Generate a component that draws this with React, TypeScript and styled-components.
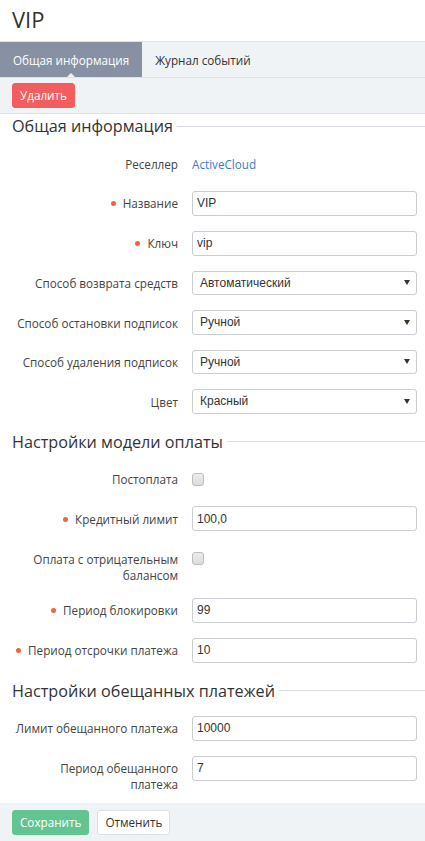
import React from "react";
import styled, { createGlobalStyle } from "styled-components";

const GlobalStyle = createGlobalStyle`
  html, body { margin: 0; padding: 0; background: #fff; }
  body { font-family: "Open Sans", "Liberation Sans", sans-serif; color: #333; }
  * { box-sizing: border-box; }
`;

const Page = styled.div`
  width: 425px;
  min-height: 841px;
  display: flex;
  flex-direction: column;
  background: #fff;
`;

const Title = styled.h1`
  margin: 0;
  height: 41px;
  padding: 7px 12px 0;
  font-size: 22px;
  line-height: 24px;
  font-weight: 400;
  color: #333;
`;

const TabBar = styled.div`
  display: flex;
  height: 37px;
  background: #f0f3f6;
  border-top: 1px solid #dfe2e7;
  border-bottom: 1px solid #dfe2e7;
`;

const Tab = styled.div<{ $active?: boolean }>`
  position: relative;
  display: flex;
  align-items: center;
  padding: 0 13px;
  font-size: 11.7px;
  color: ${(p) => (p.$active ? "#fff" : "#333")};
  background: ${(p) => (p.$active ? "#8891a3" : "transparent")};
  ${(p) =>
    p.$active
      ? `&::after {
    content: "";
    position: absolute;
    left: 50%;
    bottom: 0;
    margin-left: -4px;
    border-left: 4px solid transparent;
    border-right: 4px solid transparent;
    border-bottom: 4px solid #f0f3f6;
  }`
      : ""}
`;

const Toolbar = styled.div`
  display: flex;
  align-items: center;
  gap: 8px;
  height: 36px;
  padding: 0 12px;
  background: #f0f3f6;
  border-bottom: 1px solid #dfe2e7;
`;

const Button = styled.button<{ $variant: "danger" | "primary" | "default" }>`
  height: 25px;
  padding: 0 7px;
  border-radius: 3px;
  font-family: inherit;
  font-size: 11.7px;
  line-height: 23px;
  cursor: pointer;
  border: 1px solid
    ${(p) =>
      p.$variant === "danger" ? "#f25e5e" : p.$variant === "primary" ? "#62c492" : "#dcdfe4"};
  background: ${(p) =>
    p.$variant === "danger" ? "#f25e5e" : p.$variant === "primary" ? "#62c492" : "#fff"};
  color: ${(p) => (p.$variant === "default" ? "#333" : "#fff")};
`;

const Form = styled.div`
  display: flex;
  flex-direction: column;
  padding-bottom: 11px;
`;

const Section = styled.section`
  display: flex;
  flex-direction: column;
  & + & {
    margin-top: 16px;
  }
`;

const SectionHeading = styled.h2`
  margin: 0 0 13px;
  height: 24px;
  display: flex;
  align-items: center;
  gap: 4px;
  padding-left: 12px;
  font-size: 16.2px;
  font-weight: 400;
  color: #333;
  &::after {
    content: "";
    flex: 1;
    height: 1px;
    background: #dcdee3;
  }
`;

const Rows = styled.div`
  display: flex;
  flex-direction: column;
  gap: 15px;
`;

const Row = styled.div`
  display: grid;
  grid-template-columns: 166px 1fr;
  column-gap: 14px;
  padding: 0 8px 0 12px;
`;

const Label = styled.div<{ $required?: boolean }>`
  text-align: right;
  font-size: 11.7px;
  line-height: 16px;
  padding-top: 4.5px;
  color: #444;
  ${(p) =>
    p.$required
      ? `&::before {
    content: "";
    display: inline-block;
    width: 5px;
    height: 5px;
    border-radius: 50%;
    background: #f0643a;
    margin-right: 7px;
    vertical-align: 2px;
  }`
      : ""}
`;

const Control = styled.div`
  display: flex;
  align-items: flex-start;
  min-height: 24.5px;
`;

const StaticLink = styled.a`
  font-size: 11.7px;
  line-height: 16px;
  padding-top: 4.5px;
  color: #3b7dc8;
  text-decoration: none;
`;

const TextInput = styled.input`
  width: 100%;
  height: 25px;
  padding: 0 4px;
  border: 1px solid #c9ccd1;
  border-radius: 3px;
  font-family: "Liberation Sans", Arial, sans-serif;
  font-size: 12px;
  color: #333;
  outline: none;
`;

const SelectBox = styled.div`
  width: 100%;
  height: 24.5px;
  display: flex;
  align-items: center;
  justify-content: space-between;
  padding: 0 6px 0 7px;
  border: 1px solid #c9ccd1;
  border-radius: 3px;
  font-family: "Liberation Sans", Arial, sans-serif;
  font-size: 12px;
  color: #333;
  background: #fff;
`;

const Checkbox = styled.span`
  display: inline-block;
  margin-top: 6px;
  width: 12px;
  height: 13px;
  border: 1px solid #bdbdbd;
  border-radius: 3px;
  background: linear-gradient(#ececec, #dcdcdc);
`;

const Footer = styled.div`
  display: flex;
  align-items: center;
  gap: 8px;
  height: 38px;
  padding: 0 12px;
  background: #f0f3f6;
`;

const Arrow = () => (
  <svg width="6" height="5" viewBox="0 0 6 5">
    <path d="M0 0h6L3 5z" fill="#333" />
  </svg>
);

type Field =
  | { kind: "link"; label: string; value: string; required?: boolean }
  | { kind: "input"; label: string; value: string; required?: boolean }
  | { kind: "select"; label: string; value: string; required?: boolean }
  | { kind: "check"; label: string; required?: boolean };

const renderControl = (f: Field) => {
  switch (f.kind) {
    case "link":
      return <StaticLink href="#">{f.value}</StaticLink>;
    case "input":
      return <TextInput defaultValue={f.value} />;
    case "select":
      return (
        <SelectBox>
          <span>{f.value}</span>
          <Arrow />
        </SelectBox>
      );
    case "check":
      return <Checkbox />;
  }
};

const sections: { title: string; fields: Field[] }[] = [
  {
    title: "Общая информация",
    fields: [
      { kind: "link", label: "Реселлер", value: "ActiveCloud" },
      { kind: "input", label: "Название", value: "VIP", required: true },
      { kind: "input", label: "Ключ", value: "vip", required: true },
      { kind: "select", label: "Способ возврата средств", value: "Автоматический" },
      { kind: "select", label: "Способ остановки подписок", value: "Ручной" },
      { kind: "select", label: "Способ удаления подписок", value: "Ручной" },
      { kind: "select", label: "Цвет", value: "Красный" },
    ],
  },
  {
    title: "Настройки модели оплаты",
    fields: [
      { kind: "check", label: "Постоплата" },
      { kind: "input", label: "Кредитный лимит", value: "100,0", required: true },
      { kind: "check", label: "Оплата с отрицательным балансом" },
      { kind: "input", label: "Период блокировки", value: "99", required: true },
      { kind: "input", label: "Период отсрочки платежа", value: "10", required: true },
    ],
  },
  {
    title: "Настройки обещанных платежей",
    fields: [
      { kind: "input", label: "Лимит обещанного платежа", value: "10000" },
      { kind: "input", label: "Период обещанного платежа", value: "7" },
    ],
  },
];

export default function App() {
  return (
    <>
      <GlobalStyle />
      <Page>
        <Title>VIP</Title>
        <TabBar>
          <Tab $active>Общая информация</Tab>
          <Tab>Журнал событий</Tab>
        </TabBar>
        <Toolbar>
          <Button $variant="danger">Удалить</Button>
        </Toolbar>
        <Form>
          {sections.map((s) => (
            <Section key={s.title}>
              <SectionHeading>{s.title}</SectionHeading>
              <Rows>
                {s.fields.map((f) => (
                  <Row key={f.label}>
                    <Label $required={f.required}>{f.label}</Label>
                    <Control>{renderControl(f)}</Control>
                  </Row>
                ))}
              </Rows>
            </Section>
          ))}
        </Form>
        <Footer>
          <Button $variant="primary">Сохранить</Button>
          <Button $variant="default">Отменить</Button>
        </Footer>
      </Page>
    </>
  );
}
